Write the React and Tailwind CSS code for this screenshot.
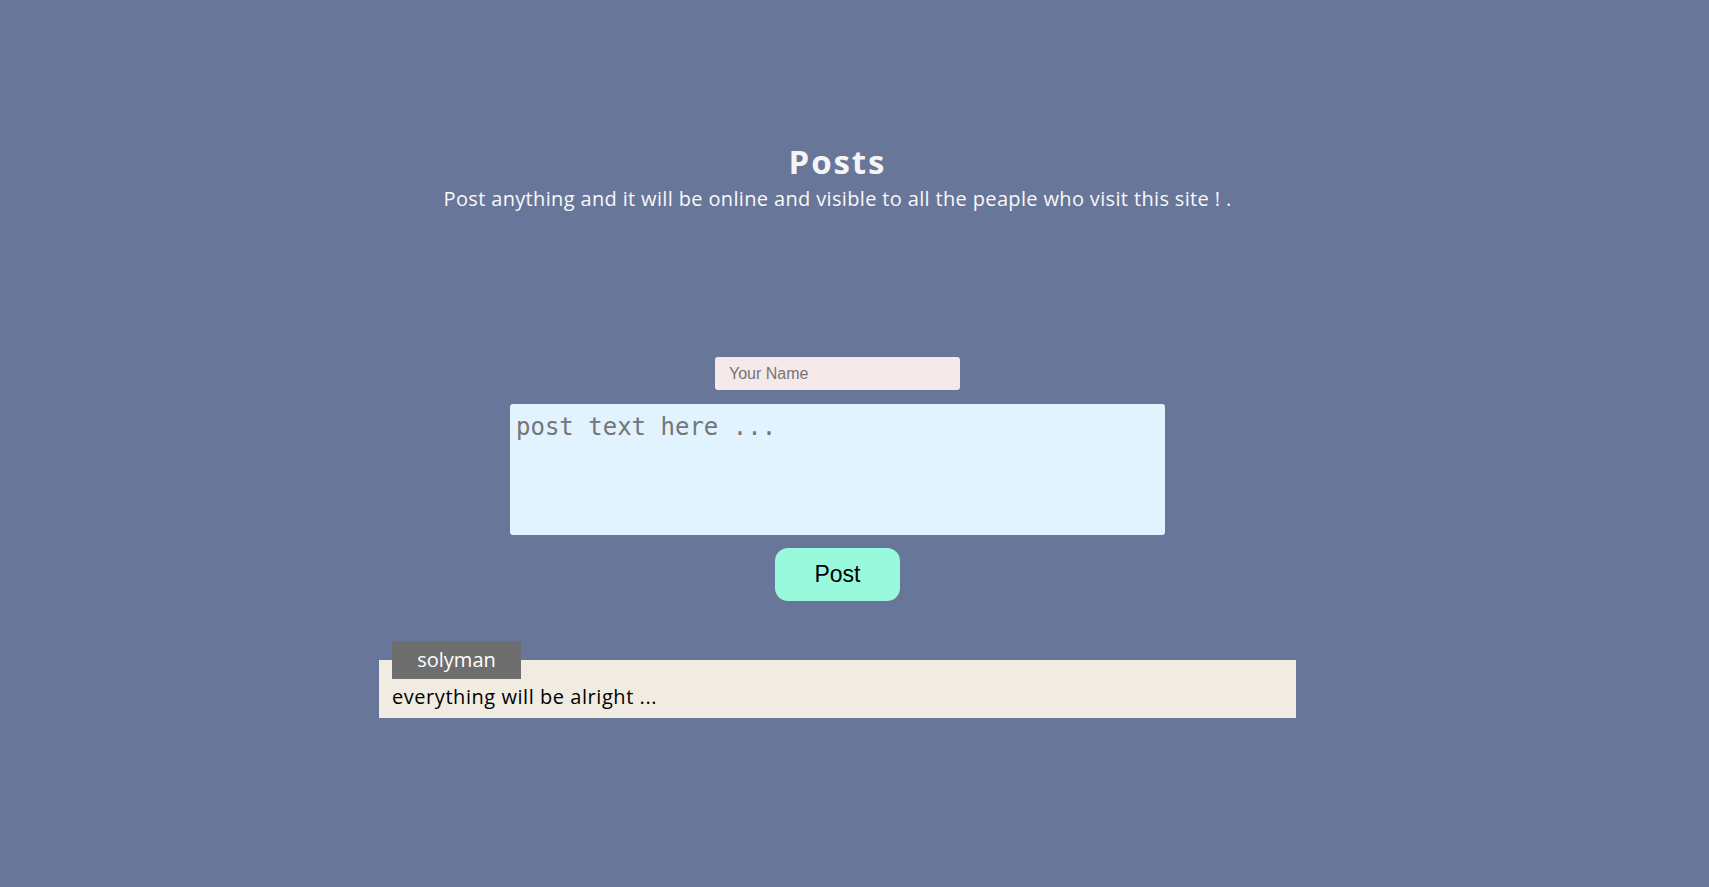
import React from "react";

export default function App() {
  return (
    <div
      className="min-h-screen bg-[#68769a] pr-[34px] flex flex-col items-center"
      style={{ fontFamily: "'Open Sans', 'Noto Sans', sans-serif" }}
    >
      <h1 className="mt-[143px] text-[33px] font-bold leading-[38px] tracking-[1.9px] text-[#f5f5f5]">
        Posts
      </h1>
      <p className="mt-[6px] text-[20px] leading-[24px] tracking-[0.35px] text-[#f8f8f8]">
        Post anything and it will be online and visible to all the peaple who visit this site ! .
      </p>
      <input
        type="text"
        placeholder="Your Name"
        className="mt-[146px] w-[245px] h-[33px] bg-[#f5e9e9] rounded-[3px] pl-[14px] text-[16px] outline-none placeholder:text-[#757575]"
        style={{ fontFamily: "'Liberation Sans', Arial, sans-serif" }}
      />
      <textarea
        placeholder="post text here ..."
        className="mt-[14px] w-[655px] h-[131px] bg-[#e0f3fe] rounded-[3px] pl-[6px] pr-[5px] pt-[5px] pb-[2px] text-[24px] resize-none outline-none placeholder:text-[#757575]"
        style={{ fontFamily: "'DejaVu Sans Mono', monospace" }}
      />
      <button
        className="mt-[13px] w-[125px] h-[53px] bg-[#98f9dc] rounded-[13px] text-[23px] text-black"
        style={{ fontFamily: "'Liberation Sans', Arial, sans-serif" }}
      >
        Post
      </button>
      <div className="mt-[59px] relative w-[917px] bg-[#f0ece2] pt-[25px] pb-[9px] px-[13px]">
        <div className="absolute top-[-19px] left-[13px] w-[129px] h-[38px] bg-[#6e6e6e] flex items-center justify-center text-[20px] leading-[24px] text-white">
          solyman
        </div>
        <p className="text-[20px] leading-[24px] tracking-[0.55px] text-black">everything will be alright ...</p>
      </div>
    </div>
  );
}
